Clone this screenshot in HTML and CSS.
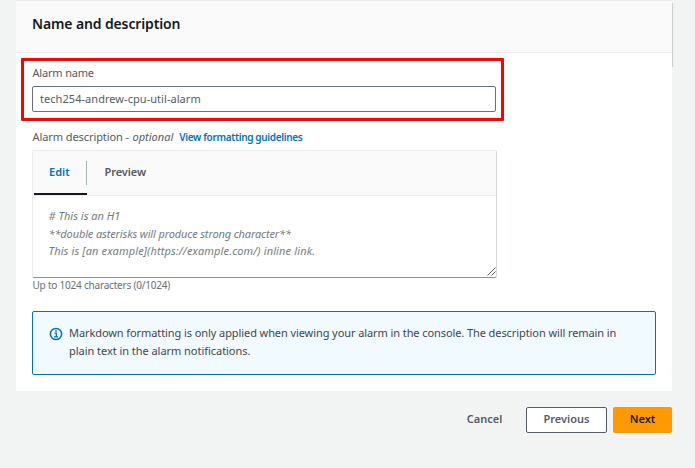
FILE: index.html
```html
<!DOCTYPE html>
<html lang="en">
<head>
<meta charset="utf-8">
<title>Name and description</title>
<link rel="stylesheet" href="styles.css">
</head>
<body>
<main class="page">
  <section class="panel">
    <header class="panel-header"><h2>Name and description</h2></header>
    <div class="panel-body">
      <div class="highlight"></div>
      <div class="label name-label">Alarm name</div>
      <div class="input"><span>tech254-andrew-cpu-util-alarm</span></div>
      <div class="label label-row"><span class="desc-label">Alarm description -</span><i>optional</i><a class="guide">View formatting guidelines</a></div>
      <div class="editor">
        <div class="tabs">
          <div class="tab active"><span class="tab-edit">Edit</span></div>
          <div class="tab"><span class="tab-preview">Preview</span></div>
        </div>
        <div class="text">
          <div><span class="line1"># This is an H1</span></div>
          <div><span class="line2">**double asterisks will produce strong character**</span></div>
          <div><span class="line3">This is [an example](https://example.com/) inline link.</span></div>
          <svg class="grip" width="9" height="9" viewBox="0 0 9 9" stroke="#555" stroke-width=".9"><path d="M.5 8.5l8-8M4.5 8.5l4-4"/></svg>
        </div>
      </div>
      <div class="hint"><span>Up to 1024 characters (0/1024)</span></div>
      <div class="alert">
        <svg class="info" width="14" height="14" viewBox="0 0 14 14" fill="none" stroke="#0073bb"><circle cx="7" cy="7" r="5.6" stroke-width="1.5"/><path d="M5.4 6.1h1.9v3.6M5 9.8h4" stroke-width="1.3"/><path d="M6.2 4h1.7" stroke-width="1.5"/></svg>
        <div class="message"><span class="message1">Markdown formatting is only applied when viewing your alarm in the console. The description will remain in</span><br><span class="message2">plain text in the alarm notifications.</span></div>
      </div>
    </div>
  </section>
  <footer class="actions">
    <div class="button cancel"><span>Cancel</span></div>
    <div class="button previous"><span>Previous</span></div>
    <div class="button next"><span>Next</span></div>
  </footer>
</main>
</body>
</html>
```
FILE: styles.css
```css
* { box-sizing: border-box; }
body {
  margin: 0;
  height: 468px;
  overflow: hidden;
  background: #f2f3f3;
  color: #545b64;
  font: 11px/18px "Noto Sans", "Open Sans", sans-serif;
}
span, i, a, h2 { white-space: nowrap; }
.page { width: 656px; margin-left: 16px; }
.panel {
  position: relative;
  height: 391px;
  background: #fff;
  border-top: 1px solid #eaeded;
}
.panel::after {
  content: "";
  position: absolute;
  left: 656px;
  top: 2px;
  width: 1px;
  height: 64px;
  background: #c9cecf;
}
.panel-header {
  height: 52px;
  padding: 12px 16px 0;
  background: #fafafa;
  border-bottom: 1px solid #eaeded;
}
h2 {
  margin: 0;
  color: #16191f;
  font-size: 14px;
  line-height: 22px;
  font-weight: 600;
  letter-spacing: -0.13px;
}
.panel-body { position: relative; padding: 11px 16px 0; }
.highlight {
  position: absolute;
  left: 5px;
  top: 5px;
  width: 483px;
  height: 63px;
  border: 3px solid #f00;
  border-radius: 1px;
}
.label { height: 18px; padding-left: 0.5px; }
.name-label { letter-spacing: -0.18px; }
.input {
  width: 464px;
  height: 26px;
  margin-top: 4px;
  padding: 3px 7px;
  border: 1px solid #687078;
  border-radius: 2px;
  letter-spacing: 0.05px;
}
.label-row { display: flex; margin-top: 16px; }
.desc-label { letter-spacing: -0.08px; }
.label-row i { margin-left: 3.5px; }
.guide { margin-left: 6px; color: #0073bb; font-size: 10px; font-weight: 600; letter-spacing: -0.34px; }
.editor {
  width: 465px;
  height: 128px;
  margin-top: 4px;
  border: 1px solid #eaeded;
  border-right-color: #d5dbdb;
  border-bottom-color: #879596;
  border-radius: 2px;
}
.tabs {
  display: flex;
  height: 45px;
  background: #fafafa;
  border-bottom: 1px solid #eaeded;
}
.tab { height: 44px; padding: 12px 0 0 17.5px; font-weight: 600; }
.tab-preview { letter-spacing: -0.08px; }
.tab.active {
  position: relative;
  width: 53px;
  margin-left: 1px;
  padding-left: 15px;
  color: #0073bb;
  border-bottom: 2px solid #16191f;
}
.tab.active::after {
  content: "";
  position: absolute;
  right: 0;
  top: 10px;
  width: 1px;
  height: 24px;
  background: #aab7b8;
}
.text { position: relative; height: 81px; padding: 11px 15.5px; color: #737b83; font-style: italic; }
.text > div { height: 17.5px; }
.line2 { letter-spacing: -0.13px; }
.line3 { letter-spacing: 0.13px; }
.grip { position: absolute; right: 0; bottom: 1px; }
.hint { height: 16px; padding-left: 0.5px; line-height: 15px; font-size: 10px; color: #687078; letter-spacing: -0.21px; }
.alert {
  display: flex;
  width: 624px;
  height: 64px;
  margin-top: 17px;
  padding: 12px 16px;
  background: #f1faff;
  border: 1px solid #0073bb;
  border-radius: 2px;
}
.info { flex: none; margin: 3px 6.5px 0 -0.5px; }
.message { color: #414750; }
.message1 { letter-spacing: -0.085px; }
.message2 { letter-spacing: -0.04px; }
.actions { display: flex; justify-content: flex-end; height: 26px; margin-top: 16px; }
.button {
  display: flex;
  height: 26px;
  padding-bottom: 2px;
  align-items: center;
  justify-content: center;
  border-radius: 2px;
  font-weight: 600;
}
.cancel { width: 71px; margin-right: 6px; }
.previous { width: 81px; margin-right: 6px; background: #fff; border: 1px solid #545b64; }
.next { width: 59px; background: #f90; color: #16191f; }
```
